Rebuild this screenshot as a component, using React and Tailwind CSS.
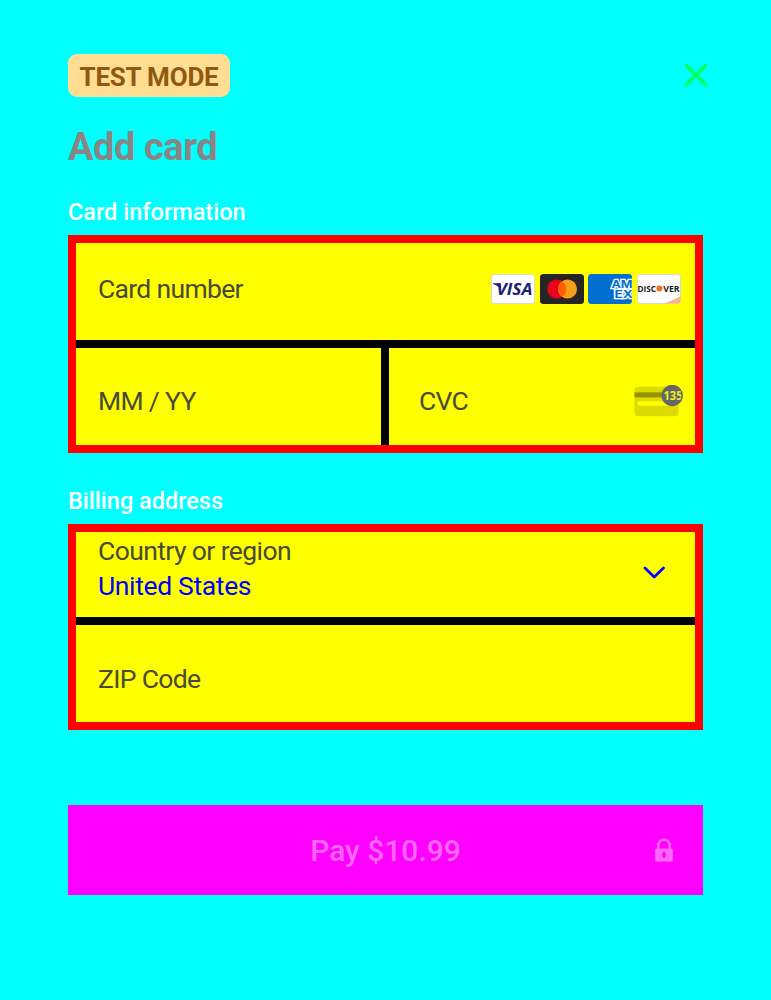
function CardBrands() {
  return (
    <div className="mb-[5.500px] flex gap-[4.600px] tracking-normal">
      <svg className="h-[30px] w-[44px]" viewBox="0 0 44 30">
        <rect x=".5" y=".5" width="43" height="29" rx="3" fill="#fff" stroke="#d9d9d9" />
        <path d="M2 9.300H7.500Q9 9.300 9.400 10.800L10.300 16.500Q7.500 11.300 2 9.900Z" fill="#1a1f71" />
        <text x="5.500" y="21" textLength="36" lengthAdjust="spacingAndGlyphs" fontFamily="Open Sans, sans-serif" fontWeight="700" fontStyle="italic" fontSize="16.500" fill="#1a1f71">VISA</text>
      </svg>
      <svg className="h-[30px] w-[44px]" viewBox="0 0 44 30">
        <rect width="44" height="30" rx="3.500" fill="#252525" />
        <circle cx="16.700" cy="15" r="9.500" fill="#eb001b" />
        <circle cx="27.500" cy="15" r="9.500" fill="#f79e1b" />
        <path d="M22.100 7.200a9.500 9.500 0 0 1 0 15.600a9.500 9.500 0 0 1 0-15.600Z" fill="#ff5f00" />
      </svg>
      <svg className="h-[30px] w-[44px]" viewBox="0 0 44 30">
        <clipPath id="amex"><rect width="44" height="30" rx="3.500" /></clipPath>
        <rect width="44" height="30" rx="3.500" fill="#016fd0" />
        <g clipPath="url(#amex)">
          <text fontFamily="Inter, sans-serif" fontWeight="700" fontSize="10.500" fill="#016fd0" stroke="#fff" strokeWidth="2.400" paintOrder="stroke">
            <tspan x="23.500" y="13.500" textLength="21" lengthAdjust="spacingAndGlyphs">AM</tspan>
            <tspan x="26.500" y="23.800" textLength="18.500" lengthAdjust="spacingAndGlyphs">EX</tspan>
          </text>
        </g>
      </svg>
      <svg className="h-[30px] w-[44px]" viewBox="0 0 44 30">
        <rect x=".5" y=".5" width="43" height="29" rx="3" fill="#fff" stroke="#d9d9d9" />
        <path d="M43.500 22Q36 27 26 29.500H40.500q3 0 3-3Z" fill="#f9b384" />
        <g fontFamily="Open Sans, sans-serif" fontWeight="700" fontSize="8.500" fill="#222">
          <text x=".4" y="17.500" textLength="18.500" lengthAdjust="spacingAndGlyphs">DISC</text>
          <text x="26.200" y="17.500" textLength="16.500" lengthAdjust="spacingAndGlyphs">VER</text>
        </g>
        <circle cx="22.500" cy="14.500" r="3" fill="#f47216" />
      </svg>
    </div>
  );
}

function CvcIcon() {
  return (
    <svg className="mt-[10px] h-[34px] w-[50px] tracking-normal" viewBox="0 0 50 34">
      <rect x="1.500" y="1.700" width="44" height="29.500" rx="3.500" fill="#dbdb00" />
      <rect x="1.500" y="7.400" width="44" height="5" fill="#929200" />
      <rect x="4.500" y="16.200" width="36" height="4.500" rx="1" fill="#ff0" />
      <circle cx="39.200" cy="10.500" r="10.700" fill="#666" />
      <clipPath id="cvc"><circle cx="38.200" cy="10.500" r="10.200" /></clipPath>
      <text clipPath="url(#cvc)" x="30.500" y="15" textLength="19" lengthAdjust="spacingAndGlyphs" fontFamily="Open Sans, sans-serif" fontWeight="700" fontSize="12" fill="#f0f020">135</text>
    </svg>
  );
}

export default function App() {
  return (
    <main className="flex h-[1000px] w-[771px] flex-col bg-[#00ffff] px-[68px] pt-[54px] font-['Roboto',sans-serif]">
      <header className="-mr-[6px] flex h-[43px] items-start justify-between">
        <div className="flex h-[42.500px] w-[162px] items-center justify-center rounded-[9px] bg-[#ffdd93] pt-[4px] text-[26px] font-bold tracking-[-0.2px] text-[#905811]">TEST MODE</div>
        <svg className="mt-[8px] h-[26px] w-[26px]" viewBox="0 0 26 26" fill="none" stroke="#00ff6a" strokeWidth="3.900" strokeLinecap="round"><path d="M3.400 3.500L22.600 22.700M22.600 3.500L3.400 22.700" /></svg>
      </header>
      <h1 className="mt-[27px] h-[46px] text-[38px] leading-[47px] font-bold tracking-[-0.45px] text-[#8a8585]">Add card</h1>
      <h2 className="mt-[28px] h-[28px] text-[23.500px] leading-[28px] font-medium text-white">Card information</h2>
      <section className="mt-[9px] h-[218px] w-[635px] border-8 border-[#ff0000] bg-[#ffff00] text-[26.500px] tracking-[-0.68px] text-[#4a4a3a]">
        <div className="flex h-[97px] items-center justify-between pr-[14px] pl-[22px]">
          <span className="mb-[6px] h-[30px] leading-[30px]">Card number</span>
          <CardBrands />
        </div>
        <div className="flex h-[105px] border-t-8 border-black">
          <div className="flex w-[313px] items-center border-r-8 border-black pt-[9px] pl-[22px]">MM / YY</div>
          <div className="flex flex-1 items-center justify-between pr-[12px] pl-[30px]">
            <span className="pt-[9px]">CVC</span>
            <CvcIcon />
          </div>
        </div>
      </section>
      <h2 className="mt-[34px] h-[28px] text-[23.500px] leading-[28px] font-medium text-white">Billing address</h2>
      <section className="mt-[9px] h-[206px] w-[635px] border-8 border-[#ff0000] bg-[#ffff00] text-[26.500px] tracking-[-0.6px] text-[#4a4a3a]">
        <div className="flex h-[85px] items-center justify-between pr-[30px] pl-[22px]">
          <div className="mb-[8px] flex h-[75px] flex-col leading-[35px]">
            <span>Country or region</span>
            <span className="tracking-[-0.35px] text-[#0000ff]">United States</span>
          </div>
          <svg className="mb-[4px] h-[16px] w-[22px]" viewBox="0 0 22 16" fill="none" stroke="#0000ff" strokeWidth="2.700" strokeLinecap="round" strokeLinejoin="round"><path d="M2 3L11.200 12L20.500 3" /></svg>
        </div>
        <div className="flex h-[105px] items-center border-t-8 border-black pt-[10px] pl-[22px] tracking-[-0.68px]">ZIP Code</div>
      </section>
      <button className="mt-[75px] grid h-[90px] w-[635px] grid-cols-[1fr_auto_1fr] items-center bg-[#ff00ff] pr-[29px] pl-[29px] text-[30px] font-medium text-[#ff66ff]">
        <span />
        <span>Pay $10.99</span>
        <svg className="h-[24px] w-[20px] justify-self-end" viewBox="0 0 20 24" fill="none">
          <path d="M4.200 11V7.500a5.800 5.800 0 0 1 11.600 0V11" stroke="#ff66ff" strokeWidth="2.500" />
          <path fillRule="evenodd" d="M3 10.500H17Q19 10.500 19 12.500V21.500Q19 23.500 17 23.500H3Q1 23.500 1 21.500V12.500Q1 10.500 3 10.500ZM10 13.800Q8.500 13.800 8.500 15.300V18.300Q8.500 20 10 20T11.500 18.300V15.300Q11.500 13.800 10 13.800Z" fill="#ff66ff" />
        </svg>
      </button>
    </main>
  );
}
